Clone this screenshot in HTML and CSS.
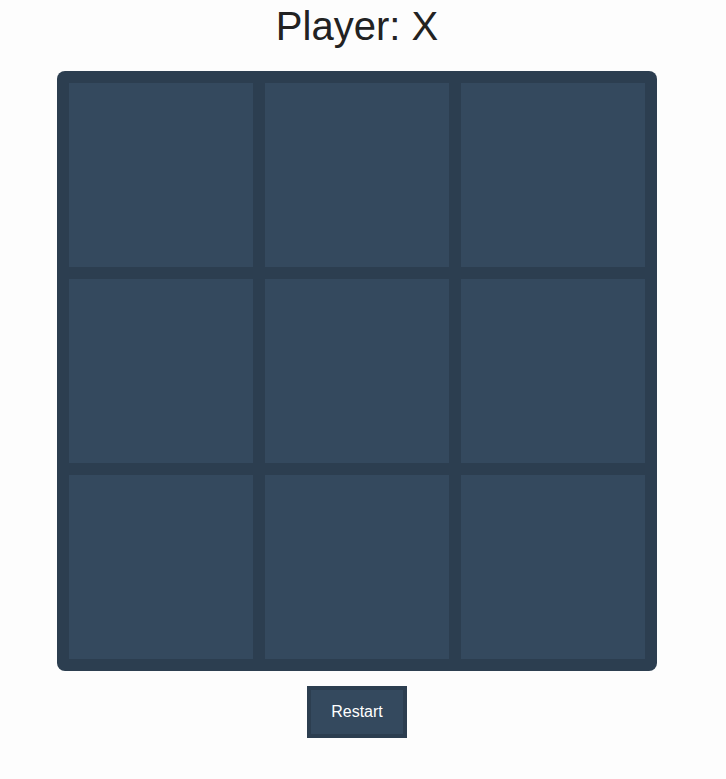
FILE: index.html
```html
<!DOCTYPE html>
<html>
<head>
<meta charset="utf-8">
<link rel="stylesheet" href="styles.css">
</head>
<body>
<main class="game">
  <h1 class="status">Player: X</h1>
  <div class="board">
    <div class="cell"></div>
    <div class="cell"></div>
    <div class="cell"></div>
    <div class="cell"></div>
    <div class="cell"></div>
    <div class="cell"></div>
    <div class="cell"></div>
    <div class="cell"></div>
    <div class="cell"></div>
  </div>
  <button class="restart">Restart</button>
</main>
</body>
</html>
```
FILE: styles.css
```css
html, body {
  margin: 0;
  padding: 0;
  background: #fdfdfd;
}
body {
  font-family: "Liberation Sans", Arial, sans-serif;
  color: #222;
}
.game {
  display: flex;
  flex-direction: column;
  align-items: center;
  padding-top: 3px;
  padding-right: 12px;
}
.status {
  margin: 0;
  font-size: 40px;
  font-weight: normal;
  line-height: 46px;
}
.board {
  margin-top: 22px;
  width: 600px;
  height: 600px;
  box-sizing: border-box;
  padding: 12px 11px 11px 12px;
  background: #2c3e50;
  border-radius: 8px;
  display: grid;
  grid-template-columns: repeat(3, 184px);
  grid-template-rows: repeat(3, 184px);
  gap: 12px;
}
.cell {
  background: #34495e;
}
.restart {
  margin-top: 15px;
  width: 100px;
  height: 52px;
  box-sizing: border-box;
  background: #34495e;
  border: 4px solid #2c3e50;
  color: #fff;
  font-family: "Liberation Sans", Arial, sans-serif;
  font-size: 16px;
  padding: 0;
  cursor: pointer;
}
```
